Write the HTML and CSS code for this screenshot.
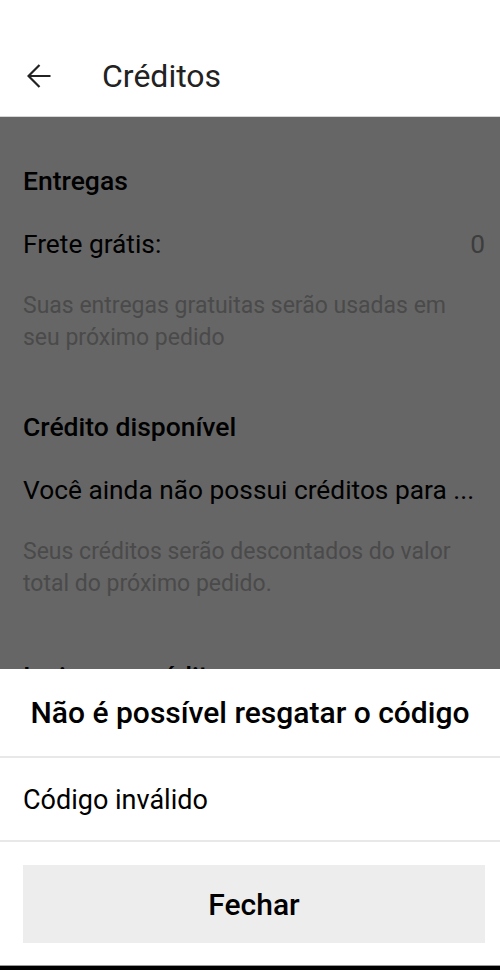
FILE: index.html
```html
<!DOCTYPE html>
<html lang="pt-BR">
<head>
  <meta charset="UTF-8" />
  <meta name="viewport" content="width=device-width, initial-scale=1.0"/>
  <title>Créditos</title>
  <link rel="stylesheet" href="styles.css">
</head>
<body>
  <header class="app-bar">
    <svg class="back" width="24" height="24" viewBox="0 0 24 24" fill="none" stroke="#222" stroke-width="2.2">
      <path d="M1.5 12H23.5M12.5 1L1.5 12l11 11"/>
    </svg>
    <h1>Créditos</h1>
  </header>

  <main class="content">
    <section class="block">
      <h2>Entregas</h2>
      <div class="row">
        <span>Frete grátis:</span>
        <span class="count">0</span>
      </div>
      <p class="desc">Suas entregas gratuitas serão usadas em<br>seu próximo pedido</p>
    </section>

    <section class="block">
      <h2>Crédito disponível</h2>
      <div class="row">
        <span>Você ainda não possui créditos para ...</span>
      </div>
      <p class="desc">Seus créditos serão descontados do valor<br>total do próximo pedido.</p>
    </section>

    <section class="block block-code">
      <h2>Insira um crédito</h2>
    </section>
  </main>

  <div class="scrim"></div>

  <div class="sheet">
    <h3 class="sheet-title">Não é possível resgatar o código</h3>
    <div class="sheet-msg">Código inválido</div>
    <div class="sheet-actions">
      <button type="button">Fechar</button>
    </div>
  </div>

  <div class="nav-bar"></div>
</body>
</html>
```

FILE: styles.css
```css
body {
  margin: 0;
  width: 500px;
  height: 970px;
  overflow: hidden;
  background: #fff;
  font-family: Roboto, "Noto Sans", sans-serif;
  color: #000;
}

.app-bar {
  display: flex;
  align-items: center;
  box-sizing: border-box;
  height: 117px;
  padding-top: 36px;
  padding-left: 27px;
  border-bottom: 1px solid #d6d6d6;
}

.back {
  flex: none;
}

.app-bar h1 {
  margin: 0 0 0 51px;
  font-weight: 400;
  font-size: 32px;
  color: #222;
}

.content {
  padding: 49px 15px 0 23px;
}

.block {
  margin-bottom: 58px;
}

.block-code {
  padding-top: 3px;
}

.block h2 {
  margin: 0;
  font-size: 26.5px;
  line-height: 30px;
  font-weight: 500;
}

.row {
  display: flex;
  justify-content: space-between;
  margin-top: 33px;
  font-size: 26.3px;
  line-height: 30px;
}

.count {
  color: #999;
}

.desc {
  margin: 31px 0 0;
  font-size: 23px;
  line-height: 32px;
  color: #bababa;
}

.scrim {
  position: fixed;
  top: 117px;
  left: 0;
  right: 0;
  bottom: 0;
  background: rgba(0, 0, 0, 0.6);
}

.sheet {
  position: fixed;
  left: 0;
  right: 0;
  bottom: 5px;
  height: 296px;
  background: #fff;
}

.sheet-title {
  margin: 0;
  height: 87px;
  line-height: 88px;
  text-align: center;
  font-size: 30px;
  font-weight: 500;
  border-bottom: 2px solid #e8e8e8;
}

.sheet-msg {
  height: 82px;
  line-height: 84px;
  padding-left: 23px;
  font-size: 27px;
  border-bottom: 2px solid #e8e8e8;
}

.sheet-actions {
  padding: 23px 15px 0 23px;
}

button {
  width: 100%;
  height: 78px;
  border: none;
  border-radius: 0;
  background: #ededed;
  font-family: inherit;
  font-size: 30px;
  font-weight: 500;
  color: #000;
}

.nav-bar {
  position: fixed;
  left: 0;
  right: 0;
  bottom: 0;
  height: 4px;
  background: #000;
  border-top: 1px solid #999;
}
```
